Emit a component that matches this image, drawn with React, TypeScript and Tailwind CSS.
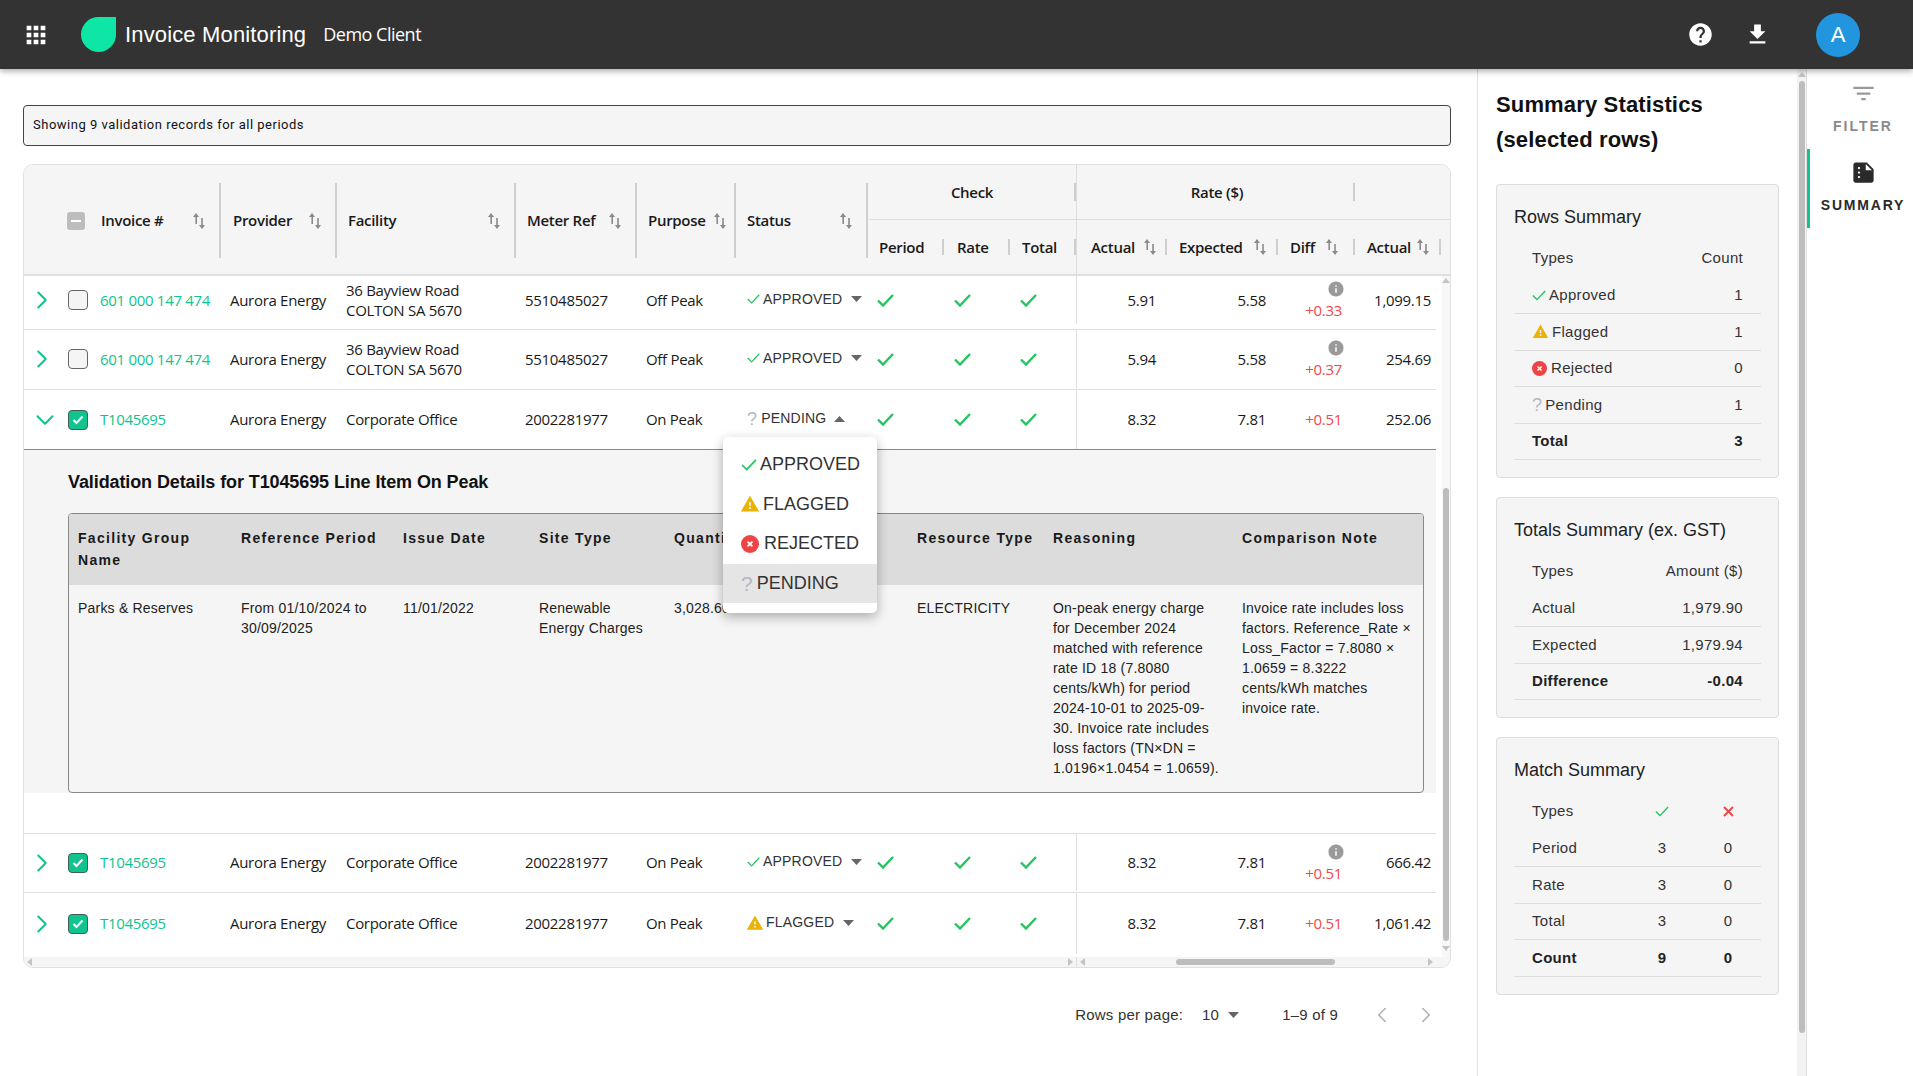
import { MdApps, MdHelp, MdFileDownload, MdFilterList, MdSummarize, MdWarning, MdInfo } from "react-icons/md";
import { ChevronRight, ChevronDown, ChevronLeft } from "lucide-react";
import type { ReactNode } from "react";

const COLS =
  "grid grid-cols-[44px_32px_119px_116px_179px_121px_99px_132px_78px_66px_66px_91px_111px_77px_81px]";
const HEAD_COLS =
  "grid grid-cols-[44px_32px_119px_116px_179px_121px_99px_132px_78px_66px_66px_91px_111px_77px_97px]";

type Status = "APPROVED" | "FLAGGED" | "REJECTED" | "PENDING";

function Tick({ w = 17, h = 13, sw = 2.4 }: { w?: number; h?: number; sw?: number }) {
  return (
    <svg width={w} height={h} viewBox="0 0 17 13" fill="none" className="shrink-0">
      <path d="M1 6.5 L6 11.5 L16 1" stroke="#22c55e" strokeWidth={sw} />
    </svg>
  );
}

function SortIcon() {
  return (
    <svg width="12" height="16" viewBox="0 0 12 16" className="shrink-0" fill="#8a8a8a">
      <path d="M3 0 L6 4 L4 4 L4 11 L2.4 11 L2.4 4 L0 4 Z" />
      <path d="M9 16 L12 12 L9.8 12 L9.8 5 L8.2 5 L8.2 12 L6 12 Z" />
    </svg>
  );
}

function Caret({ up }: { up?: boolean }) {
  return (
    <svg width="11" height="6" viewBox="0 0 11 6" fill="#666" className="shrink-0">
      <path d={up ? "M5.5 0 L11 6 L0 6 Z" : "M0 0 L11 0 L5.5 6 Z"} />
    </svg>
  );
}

function RejectedDot({ size = 15 }: { size?: number }) {
  return (
    <svg width={size} height={size} viewBox="0 0 16 16" className="shrink-0">
      <circle cx="8" cy="8" r="8" fill="#ef4444" />
      <path d="M5.8 5.8 L10.2 10.2 M10.2 5.8 L5.8 10.2" stroke="#fff" strokeWidth="1.6" />
    </svg>
  );
}

function Checkbox({ checked }: { checked?: boolean }) {
  if (checked) {
    return (
      <span className="flex h-5 w-5 items-center justify-center rounded-[4px] border border-[#3f5f55] bg-[#10c48f]">
        <svg width="12" height="10" viewBox="0 0 12 10" fill="none">
          <path d="M1.5 5 L4.5 8 L10.5 1.5" stroke="#fff" strokeWidth="2" />
        </svg>
      </span>
    );
  }
  return <span className="h-5 w-5 rounded-[4px] border border-[#666] bg-[#f5f5f5]" />;
}

function HeadCell({ label, pl, gap = "ml-[11px]" }: { label: string; pl: string; gap?: string }) {
  return (
    <div className={`row-span-2 flex items-center justify-between pt-[2px] ${pl}`}>
      <span className="font-semibold">{label}</span>
      <span className="-mr-[2px] flex items-center gap-[3px]">
        <SortIcon />
        <span className={`${gap} h-[75px] w-0.5 bg-[#cfcfcf]`} />
      </span>
    </div>
  );
}

function SubHead({
  label,
  sort,
  className = "",
  gap = "ml-[10px]",
}: {
  label: string;
  sort?: boolean;
  className?: string;
  gap?: string;
}) {
  return (
    <div className={`flex items-center justify-between pl-[12px] ${className}`}>
      <span className="font-semibold">{label}</span>
      <span className="flex items-center">
        {sort && <SortIcon />}
        <span className={`${gap} h-[16px] w-0.5 bg-[#cfcfcf]`} />
      </span>
    </div>
  );
}

function StatusCell({ status, open }: { status: Status; open?: boolean }) {
  return (
    <div className="relative flex items-center pl-[13px] font-['Liberation_Sans',sans-serif] text-[14px] tracking-[0.2px]">
      <div className="mb-[2px] flex items-center">
        {status === "APPROVED" && (
          <>
            <Tick w={13} h={10} sw={1.6} />
            <span className="ml-[3px] text-[#333]">APPROVED</span>
            <span className="ml-[9px]">
              <Caret />
            </span>
          </>
        )}
        {status === "FLAGGED" && (
          <>
            <MdWarning size={18} className="-ml-[1px] shrink-0 text-[#eab308]" />
            <span className="ml-[2px] text-[#333]">FLAGGED</span>
            <span className="ml-[9px]">
              <Caret />
            </span>
          </>
        )}
        {status === "PENDING" && (
          <>
            <span className="text-[18px] leading-none text-[#b4b8c4]">?</span>
            <span className="ml-[4px] text-[#333]">PENDING</span>
            <span className="ml-[8px]">
              <Caret up={open} />
            </span>
          </>
        )}
      </div>
      {open && (
        <div className="absolute -left-[11px] top-[47px] z-20 h-[176px] w-[154px] rounded-[5px] bg-white pt-[8px] text-[18px] tracking-normal text-[#333] shadow-[0_4px_12px_rgba(0,0,0,0.3)]">
          <div className="flex h-[39.5px] items-center pl-[18px]">
            <Tick w={16} h={12} sw={1.9} />
            <span className="ml-[3px]">APPROVED</span>
          </div>
          <div className="flex h-[39.5px] items-center pl-[17px]">
            <MdWarning size={20} className="shrink-0 text-[#eab308]" />
            <span className="ml-[3px]">FLAGGED</span>
          </div>
          <div className="flex h-[39.5px] items-center pl-[18px]">
            <RejectedDot size={18} />
            <span className="ml-[5px]">REJECTED</span>
          </div>
          <div className="flex h-[39.5px] items-center bg-[#e5e5e5] pl-[18px]">
            <span className="text-[21px] leading-none text-[#b4b8c4]">?</span>
            <span className="ml-[4px]">PENDING</span>
          </div>
        </div>
      )}
    </div>
  );
}

type RowData = {
  h: string;
  invoice: string;
  facility: ReactNode;
  meter: string;
  purpose: string;
  status: Status;
  checked?: boolean;
  expanded?: boolean;
  actual: string;
  expected: string;
  diff: string;
  info?: boolean;
  total: string;
  border: string;
};

const rows: RowData[] = [
  {
    h: "h-[54px] pb-[5px]",
    invoice: "601 000 147 474",
    facility: (
      <>
        36 Bayview Road
        <br />
        COLTON SA 5670
      </>
    ),
    meter: "5510485027",
    purpose: "Off Peak",
    status: "APPROVED",
    actual: "5.91",
    expected: "5.58",
    diff: "+0.33",
    info: true,
    total: "1,099.15",
    border: "border-b border-[#e0e0e0]",
  },
  {
    h: "h-[60px] pb-[1px]",
    invoice: "601 000 147 474",
    facility: (
      <>
        36 Bayview Road
        <br />
        COLTON SA 5670
      </>
    ),
    meter: "5510485027",
    purpose: "Off Peak",
    status: "APPROVED",
    actual: "5.94",
    expected: "5.58",
    diff: "+0.37",
    info: true,
    total: "254.69",
    border: "border-b border-[#e0e0e0]",
  },
  {
    h: "h-[60px]",
    invoice: "T1045695",
    facility: "Corporate Office",
    meter: "2002281977",
    purpose: "On Peak",
    status: "PENDING",
    checked: true,
    expanded: true,
    actual: "8.32",
    expected: "7.81",
    diff: "+0.51",
    total: "252.06",
    border: "border-b border-[#888]",
  },
  {
    h: "h-[59px] pb-[1px]",
    invoice: "T1045695",
    facility: "Corporate Office",
    meter: "2002281977",
    purpose: "On Peak",
    status: "APPROVED",
    checked: true,
    actual: "8.32",
    expected: "7.81",
    diff: "+0.51",
    info: true,
    total: "666.42",
    border: "border-b border-[#e0e0e0]",
  },
  {
    h: "h-[64px] pb-[3px]",
    invoice: "T1045695",
    facility: "Corporate Office",
    meter: "2002281977",
    purpose: "On Peak",
    status: "FLAGGED",
    checked: true,
    actual: "8.32",
    expected: "7.81",
    diff: "+0.51",
    total: "1,061.42",
    border: "",
  },
];

function Row({ row }: { row: RowData }) {
  return (
    <div className={`${COLS} ${row.h} ${row.border} items-stretch text-[#1a1a1a]`}>
      <div className="flex items-center pl-[7px] text-[#10c48f]">
        {row.expanded ? (
          <ChevronDown size={30} strokeWidth={1.6} className="-ml-[1px]" />
        ) : (
          <ChevronRight size={30} strokeWidth={1.6} className="-ml-[4px]" />
        )}
      </div>
      <div className="flex items-center">
        <Checkbox checked={row.checked} />
      </div>
      <div className="flex items-center text-[#10c48f]">{row.invoice}</div>
      <div className="flex items-center pl-[11px]">Aurora Energy</div>
      <div className="flex items-center pb-[1px] pl-[11px] leading-[20px]">
        <div>{row.facility}</div>
      </div>
      <div className="flex items-center pl-[11px]">{row.meter}</div>
      <div className="flex items-center pl-[11px]">{row.purpose}</div>
      <StatusCell status={row.status} open={row.expanded} />
      <div className="flex items-center pl-[11px]">
        <Tick />
      </div>
      <div className="flex items-center pl-[10px]">
        <Tick />
      </div>
      <div className="flex items-center pl-[10px]">
        <Tick />
      </div>
      <div className="flex items-center justify-end border-l border-[#e0e0e0] pr-[11px]">{row.actual}</div>
      <div className="flex items-center justify-end pr-[12px]">{row.expected}</div>
      <div className="flex items-center justify-end pr-[13px] text-[#f04a4a]">
        {row.info ? (
          <div className="flex flex-col items-end">
            <MdInfo size={18} className="-mr-[3px] text-[#9a9a9a]" />
            <span className="mt-[2px] leading-[20px]">{row.diff}</span>
          </div>
        ) : (
          row.diff
        )}
      </div>
      <div className="flex items-center justify-end pr-[5px]">{row.total}</div>
    </div>
  );
}

function DetailPanel() {
  const cell = "px-[10px]";
  return (
    <div className="relative border-b border-[#e0e0e0] pb-[40px]">
      <div className="bg-[#f5f5f5] pl-[44px] pr-[12px] pt-[18px] font-['Liberation_Sans',sans-serif]">
        <h3 className="text-[18px] font-bold leading-[28px] tracking-[-0.1px] text-[#111]">
          Validation Details for T1045695 Line Item On Peak
        </h3>
        <div className="mt-[17px] h-[280px] overflow-hidden rounded-[4px] border border-[#888]">
          <div className="grid h-[71px] grid-cols-[162px_162px_136px_135px_243px_136px_189px_1fr] bg-[#dcdcdc] pt-[13px] text-[14px] font-bold leading-[22px] tracking-[1.3px] text-[#1a1a1a]">
            <div className="px-[9px]">Facility Group Name</div>
            <div className={`${cell} whitespace-nowrap`}>Reference Period</div>
            <div className={cell}>Issue Date</div>
            <div className={cell}>Site Type</div>
            <div className={cell}>Quantity</div>
            <div className={`${cell} whitespace-nowrap`}>Resource Type</div>
            <div className={cell}>Reasoning</div>
            <div className={`${cell} whitespace-nowrap`}>Comparison Note</div>
          </div>
          <div className="grid grid-cols-[162px_162px_136px_135px_243px_136px_189px_1fr] pt-[13px] text-[14px] leading-[20px] tracking-[0.2px] text-[#222]">
            <div className="px-[9px]">Parks &amp; Reserves</div>
            <div className={cell}>From 01/10/2024 to 30/09/2025</div>
            <div className={cell}>11/01/2022</div>
            <div className={cell}>Renewable Energy Charges</div>
            <div className={cell}>3,028.60</div>
            <div className={cell}>ELECTRICITY</div>
            <div className={cell}>
              On-peak energy charge for December 2024 matched with reference rate ID 18 (7.8080 cents/kWh) for period
              2024-10-01 to 2025-09-30. Invoice rate includes loss factors (TN×DN = 1.0196×1.0454 = 1.0659).
            </div>
            <div className={cell}>
              Invoice rate includes loss factors. Reference_Rate × Loss_Factor = 7.8080 × 1.0659 = 8.3222 cents/kWh
              matches invoice rate.
            </div>
          </div>
        </div>
      </div>
    </div>
  );
}

function DataTable() {
  return (
    <div className="ml-[23px] mt-[18px] w-[1428px] overflow-hidden rounded-[10px] border border-[#e0e0e0] font-['Open_Sans',sans-serif] text-[15px] tracking-[-0.3px]">
      <div className="bg-[#f5f5f5] text-[#1a1a1a]">
        <div className={`${HEAD_COLS} h-[111px] grid-rows-[55px_54px] border-b-2 border-[#e0e0e0]`}>
          <div className="row-span-2" />
          <div className="row-span-2 -ml-[1px] flex items-center pt-[2px]">
            <span className="flex h-[18px] w-[18px] items-center justify-center rounded-[3px] bg-[#bdbdbd]">
              <span className="h-0.5 w-[10px] bg-white" />
            </span>
          </div>
          <HeadCell label="Invoice #" pl="pl-[1px]" />
          <HeadCell label="Provider" pl="pl-[14px]" />
          <HeadCell label="Facility" pl="pl-[13px]" />
          <HeadCell label="Meter Ref" pl="pl-[13px]" />
          <HeadCell label="Purpose" pl="pl-[13px]" gap="ml-[5px]" />
          <HeadCell label="Status" pl="pl-[13px]" />
          <div className="col-span-3 ml-[3px] flex items-center justify-between border-b border-[#dcdcdc]">
            <span className="flex-1 pl-[1px] text-center font-semibold">Check</span>
            <span className="h-[18px] w-0.5 bg-[#cfcfcf]" />
          </div>
          <div className="col-span-3 flex items-center justify-between border-b border-l border-[#dcdcdc]">
            <span className="flex-1 pl-[4px] text-center font-semibold">Rate ($)</span>
            <span className="h-[18px] w-0.5 bg-[#cfcfcf]" />
          </div>
          <div className="border-b border-[#dcdcdc]" />
          <div className="flex items-center justify-between pl-[13px]">
            <span className="font-semibold">Period</span>
            <span className="h-[16px] w-0.5 bg-[#cfcfcf]" />
          </div>
          <SubHead label="Rate" className="pl-[13px]" />
          <SubHead label="Total" />
          <div className="flex items-center justify-between border-l border-[#dcdcdc] pl-[14px]">
            <span className="font-semibold">Actual</span>
            <span className="flex items-center">
              <SortIcon />
              <span className="ml-[9px] h-[16px] w-0.5 bg-[#cfcfcf]" />
            </span>
          </div>
          <SubHead label="Expected" sort />
          <SubHead label="Diff" sort gap="ml-[15px]" />
          <SubHead label="Actual" sort className="pr-[11px]" />
        </div>
      </div>
      <div className="flex">
        <div className="w-[1412px]">
          <Row row={rows[0]} />
          <Row row={rows[1]} />
          <Row row={rows[2]} />
          <DetailPanel />
          <Row row={rows[3]} />
          <Row row={rows[4]} />
        </div>
        <div className="ml-[6px] flex w-[9px] flex-col items-center bg-[#f7f7f7] pt-[2px]">
          <span className="border-x-[4px] border-b-[5px] border-x-transparent border-b-[#c4c4c4]" />
          <span className="mt-[205px] h-[453px] w-[6px] rounded-full bg-[#bdbdbd]" />
          <span className="mt-[5px] border-x-[4px] border-t-[5px] border-x-transparent border-t-[#c4c4c4]" />
        </div>
      </div>
      <div className="flex h-[10px] items-center bg-[#f5f5f5]">
        <div className="flex h-full w-[1052px] items-center justify-between pl-[3px] pr-[3px]">
          <span className="border-y-[4px] border-r-[5px] border-y-transparent border-r-[#c4c4c4]" />
          <span className="border-y-[4px] border-l-[5px] border-y-transparent border-l-[#c4c4c4]" />
        </div>
        <div className="flex h-full w-[360px] items-center border-l border-[#e0e0e0] pl-[3px]">
          <span className="border-y-[4px] border-r-[5px] border-y-transparent border-r-[#c4c4c4]" />
          <span className="ml-[91px] h-[6px] w-[159px] rounded-full bg-[#bdbdbd]" />
          <span className="ml-[93px] border-y-[4px] border-l-[5px] border-y-transparent border-l-[#c4c4c4]" />
        </div>
      </div>
    </div>
  );
}

function Pagination() {
  return (
    <div className="mt-[36px] flex h-[22px] w-[1451px] items-center justify-end text-[15px] tracking-[0.2px] text-[#333]">
      <span>Rows per page:</span>
      <span className="ml-[19px]">10</span>
      <span className="ml-[9px]">
        <Caret />
      </span>
      <span className="ml-[43px]">1–9 of 9</span>
      <ChevronLeft size={26} strokeWidth={1.4} className="ml-[31px] text-[#b0b0b0]" />
      <ChevronRight size={26} strokeWidth={1.4} className="ml-[18px] mr-[12px] text-[#b0b0b0]" />
    </div>
  );
}

function Card({ title, children, className = "" }: { title: string; children: ReactNode; className?: string }) {
  return (
    <section
      className={`w-[283px] rounded-[4px] border border-[#dcdcdc] bg-[#f5f5f5] px-[17px] pb-[17px] pt-[17px] ${className}`}
    >
      <h3 className="mb-[8px] text-[18px] leading-[30px] tracking-normal text-[#222]">{title}</h3>
      {children}
    </section>
  );
}

function SumRow({
  label,
  value,
  bold,
  head,
}: {
  label: ReactNode;
  value: ReactNode;
  bold?: boolean;
  head?: boolean;
}) {
  return (
    <div
      className={`flex items-center justify-between pl-[18px] pr-[18px] ${head ? "h-[37.5px] pb-[1px]" : "h-[36.5px] border-b border-[#dcdcdc]"} ${bold ? "font-bold text-[#222]" : ""}`}
    >
      <span className="flex items-center">{label}</span>
      <span>{value}</span>
    </div>
  );
}

function MatchRow({ label, a, b, bold, head }: { label: string; a: ReactNode; b: ReactNode; bold?: boolean; head?: boolean }) {
  return (
    <div
      className={`grid grid-cols-[115px_66px_66px] items-center ${head ? "h-[37.5px] pb-[1px]" : "h-[36.5px] border-b border-[#dcdcdc]"} ${bold ? "font-bold text-[#222]" : ""}`}
    >
      <span className="pl-[18px]">{label}</span>
      <span className="flex justify-center">{a}</span>
      <span className="flex justify-center">{b}</span>
    </div>
  );
}

function SummaryPanel() {
  return (
    <aside className="relative flex w-[330px] border-l border-r border-[#e0e0e0]">
      <div className="w-[320px] pl-[18px] pt-[18px]">
        <h2 className="text-[22px] font-bold leading-[35px] tracking-[0.15px] text-[#111]">
          Summary Statistics
          <br />
          (selected rows)
        </h2>
        <div className="mt-[27px] flex flex-col gap-[19px] text-[15px] tracking-[0.3px] text-[#333]">
          <Card title="Rows Summary">
            <SumRow head label="Types" value="Count" />
            <SumRow
              label={
                <>
                  <Tick w={14} h={11} sw={1.7} />
                  <span className="ml-[3px]">Approved</span>
                </>
              }
              value="1"
            />
            <SumRow
              label={
                <>
                  <MdWarning size={17} className="text-[#eab308]" />
                  <span className="ml-[3px]">Flagged</span>
                </>
              }
              value="1"
            />
            <SumRow
              label={
                <>
                  <RejectedDot />
                  <span className="ml-[4px]">Rejected</span>
                </>
              }
              value="0"
            />
            <SumRow
              label={
                <>
                  <span className="text-[18px] leading-none text-[#b4b8c4]">?</span>
                  <span className="ml-[3px]">Pending</span>
                </>
              }
              value="1"
            />
            <SumRow bold label="Total" value="3" />
          </Card>
          <Card title="Totals Summary (ex. GST)">
            <SumRow head label="Types" value="Amount ($)" />
            <SumRow label="Actual" value="1,979.90" />
            <SumRow label="Expected" value="1,979.94" />
            <SumRow bold label="Difference" value="-0.04" />
          </Card>
          <Card title="Match Summary">
            <MatchRow
              head
              label="Types"
              a={<Tick w={14} h={11} sw={1.7} />}
              b={
                <svg width="11" height="11" viewBox="0 0 11 11">
                  <path d="M1 1 L10 10 M10 1 L1 10" stroke="#ef4444" strokeWidth="1.8" />
                </svg>
              }
            />
            <MatchRow label="Period" a="3" b="0" />
            <MatchRow label="Rate" a="3" b="0" />
            <MatchRow label="Total" a="3" b="0" />
            <MatchRow bold label="Count" a="9" b="0" />
          </Card>
        </div>
      </div>
      <div className="flex w-[9px] flex-col items-center bg-[#f3f3f3] pt-[3px]">
        <span className="border-x-[4px] border-b-[5px] border-x-transparent border-b-[#c4c4c4]" />
        <span className="mt-[4px] h-[952px] w-[6px] rounded-full bg-[#bdbdbd]" />
      </div>
    </aside>
  );
}

function Rail() {
  return (
    <nav className="flex flex-1 flex-col font-bold">
      <div className="flex h-[80px] flex-col items-center pl-[6px] pt-[11px] text-[#8a8a8a]">
        <MdFilterList size={27} className="text-[#9a9a9a]" />
        <span className="mt-[9px] text-[14px] leading-[20px] tracking-[2px]">FILTER</span>
      </div>
      <div className="flex h-[79px] flex-col items-center border-l-[3px] border-[#10c48f] pl-[3px] pt-[10px] text-[#2a2a2a]">
        <MdSummarize size={27} />
        <span className="mt-[9px] text-[14px] leading-[20px] tracking-[1.8px]">SUMMARY</span>
      </div>
    </nav>
  );
}

export default function App() {
  return (
    <div className="flex h-screen w-full flex-col overflow-hidden bg-white font-['Liberation_Sans',Arial,sans-serif]">
      <header className="relative z-30 flex h-[69px] shrink-0 items-center bg-[#333] text-white shadow-[0_2px_6px_rgba(0,0,0,0.35)]">
        <MdApps size={28} className="ml-[22px]" />
        <span className="ml-[31px] h-[35px] w-[35px] rounded-[50%_0_50%_50%] bg-[#0ee6a5]" />
        <span className="ml-[9px] text-[22px] tracking-[0.15px]">Invoice Monitoring</span>
        <span className="ml-[17px] font-['Open_Sans',sans-serif] text-[18px] font-medium tracking-[-0.5px]">
          Demo Client
        </span>
        <MdHelp size={27} className="ml-auto" />
        <MdFileDownload size={27} className="ml-[30px]" />
        <span className="ml-[45px] mr-[53px] flex h-11 w-11 items-center justify-center rounded-full bg-[#2196df] text-[22px]">
          A
        </span>
      </header>
      <div className="flex min-h-0 flex-1">
        <main className="w-[1477px] shrink-0 pt-[36px]">
          <div className="ml-[23px] flex h-[41px] w-[1428px] items-center rounded-[4px] border border-[#444] bg-[#f5f5f5] pb-[2px] pl-[9px] font-['Roboto',sans-serif] text-[13px] tracking-[0.5px] text-[#111]">
            Showing 9 validation records for all periods
          </div>
          <DataTable />
          <Pagination />
        </main>
        <SummaryPanel />
        <Rail />
      </div>
    </div>
  );
}
